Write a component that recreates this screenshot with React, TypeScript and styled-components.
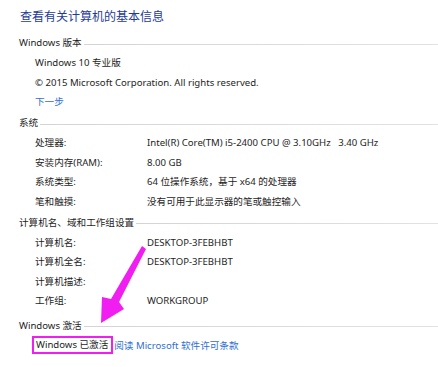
import styled, { createGlobalStyle } from 'styled-components';

const GlobalStyle = createGlobalStyle`
  html, body {
    margin: 0;
    padding: 0;
    background: #ffffff;
  }
  body {
    font-family: "Noto Sans", "Noto Sans CJK SC", sans-serif;
    color: #1e1e1e;
  }
`;

type Row = { label: string; value?: string };

const systemRows: Row[] = [
  { label: '处理器:', value: 'Intel(R) Core(TM) i5-2400 CPU @ 3.10GHz\u00a0\u00a0\u00a03.40 GHz' },
  { label: '安装内存(RAM):', value: '8.00 GB' },
  { label: '系统类型:', value: '64 位操作系统，基于 x64 的处理器' },
  { label: '笔和触摸:', value: '没有可用于此显示器的笔或触控输入' },
];

const computerRows: Row[] = [
  { label: '计算机名:', value: 'DESKTOP-3FEBHBT' },
  { label: '计算机全名:', value: 'DESKTOP-3FEBHBT' },
  { label: '计算机描述:' },
  { label: '工作组:', value: 'WORKGROUP' },
];

export default function App() {
  return (
    <>
      <GlobalStyle />
      <Page>
        <Title>查看有关计算机的基本信息</Title>

        <Section $gap={6}>
          <SectionHeader>Windows 版本</SectionHeader>
          <Line>Windows 10 专业版</Line>
          <Line>© 2015 Microsoft Corporation. All rights reserved.</Line>
          <Line><Link>下一步</Link></Line>
        </Section>

        <Section>
          <SectionHeader>系统</SectionHeader>
          {systemRows.map((r) => (
            <InfoRow key={r.label}>
              <span>{r.label}</span>
              <span>{r.value}</span>
            </InfoRow>
          ))}
        </Section>

        <Section>
          <SectionHeader>计算机名、域和工作组设置</SectionHeader>
          {computerRows.map((r) => (
            <InfoRow key={r.label}>
              <span>{r.label}</span>
              <span>{r.value}</span>
            </InfoRow>
          ))}
        </Section>

        <Section $gap={5}>
          <SectionHeader>Windows 激活</SectionHeader>
          <ActivationRow>
            <Activated>Windows 已激活</Activated>
            <Link>阅读 Microsoft 软件许可条款</Link>
          </ActivationRow>
        </Section>

        <Arrow viewBox="0 0 438 367" aria-hidden>
          <polygon
            points="142,246 146,249 119,302 124,309 101,323 102,297 111,299"
            fill="#f01ef0"
          />
        </Arrow>
      </Page>
    </>
  );
}

const Page = styled.div`
  position: relative;
  width: 438px;
  height: 367px;
  overflow: hidden;
  padding: 7px 0 0 19px;
  box-sizing: border-box;
  font-size: 9.6px;
`;

const Title = styled.div`
  font-size: 12px;
  line-height: 20px;
  color: #1e3b95;
  padding-left: 1px;
`;

const Section = styled.div<{ $gap?: number }>`
  display: flex;
  flex-direction: column;
  margin-top: ${(p) => p.$gap ?? 1.5}px;
`;

const SectionHeader = styled.div`
  display: flex;
  align-items: center;
  gap: 2px;
  height: 20px;
  line-height: 20px;
  white-space: nowrap;

  &::after {
    content: '';
    flex: 1;
    height: 1px;
    margin-top: 2px;
    background: linear-gradient(to right, #d4d4d4, #e2e2e2);
  }
`;

const Line = styled.div`
  height: 19.5px;
  line-height: 19.5px;
  padding-left: 16px;
  white-space: nowrap;
`;

const InfoRow = styled.div`
  display: grid;
  grid-template-columns: 112px 1fr;
  height: 19.5px;
  line-height: 19.5px;
  padding-left: 16px;
  white-space: nowrap;
`;

const Link = styled.span`
  color: #2f6fd0;
`;

const ActivationRow = styled.div`
  display: flex;
  align-items: center;
  gap: 1px;
  height: 19.5px;
  padding-left: 13px;
  white-space: nowrap;
`;

const Activated = styled.span`
  border: 2px solid #f01ef0;
  padding: 0 3px 0 2px;
  line-height: 14px;
`;

const Arrow = styled.svg`
  position: absolute;
  left: 0;
  top: 0;
  width: 438px;
  height: 367px;
  pointer-events: none;
`;
